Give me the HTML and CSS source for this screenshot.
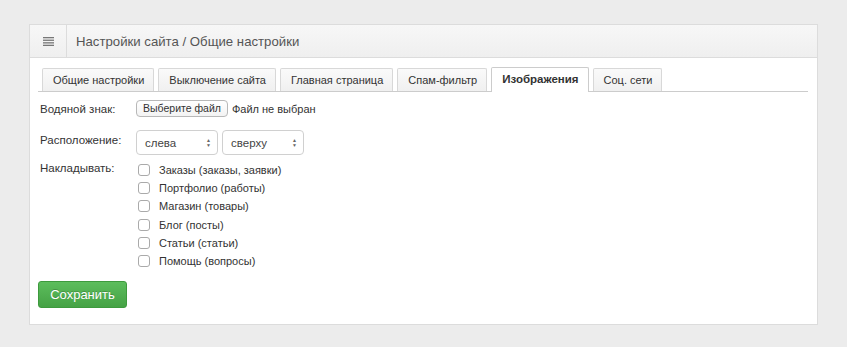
FILE: index.html
```html
<!DOCTYPE html>
<html lang="ru">
<head>
    <meta charset="UTF-8" />
    <title>Настройки сайта</title>
    <link rel="stylesheet" href="styles.css">
</head>
<body>

    <div class="panel">
        <div class="panel-header">
            <div class="panel-icon">
                <svg width="11" height="9" viewBox="0 0 11 9"><g fill="#777"><rect y="0" width="11" height="1.3"/><rect y="2.6" width="11" height="1.3"/><rect y="5.2" width="11" height="1.3"/><rect y="7.7" width="11" height="1.3"/></g></svg>
            </div>
            <div class="panel-title">Настройки сайта / Общие настройки</div>
        </div>

        <div class="panel-body">
            <ul class="tabs">
                <li class="tab">Общие настройки</li>
                <li class="tab">Выключение сайта</li>
                <li class="tab">Главная страница</li>
                <li class="tab">Спам-фильтр</li>
                <li class="tab active">Изображения</li>
                <li class="tab">Соц. сети</li>
            </ul>

            <div class="form">
                <div class="row row-file">
                    <div class="label">Водяной знак:</div>
                    <div class="control">
                        <span class="file-btn">Выберите файл</span>
                        <span class="file-name">Файл не выбран</span>
                    </div>
                </div>

                <div class="row row-select">
                    <div class="label">Расположение:</div>
                    <div class="control">
                        <div class="select">слева <span class="arrows">&#9650;<br>&#9660;</span></div>
                        <div class="select">сверху <span class="arrows">&#9650;<br>&#9660;</span></div>
                    </div>
                </div>

                <div class="row row-check">
                    <div class="label">Накладывать:</div>
                    <div class="checks">
                        <label class="check"><span class="box"></span>Заказы (заказы, заявки)</label>
                        <label class="check"><span class="box"></span>Портфолио (работы)</label>
                        <label class="check"><span class="box"></span>Магазин (товары)</label>
                        <label class="check"><span class="box"></span>Блог (посты)</label>
                        <label class="check"><span class="box"></span>Статьи (статьи)</label>
                        <label class="check"><span class="box"></span>Помощь (вопросы)</label>
                    </div>
                </div>
            </div>

            <button class="btn-save">Сохранить</button>
        </div>
    </div>

</body>
</html>
```

FILE: styles.css
```css
body {
    margin: 0;
    padding: 24px 29px;
    background: #ececec;
    font-family: "Liberation Sans", Arial, sans-serif;
    font-size: 11.5px;
    color: #333;
}

.panel {
    width: 787px;
    background: #fff;
    border: 1px solid #dcdcdc;
}

.panel-header {
    display: flex;
    height: 32px;
    border-bottom: 1px solid #dcdcdc;
    background: linear-gradient(#f7f7f7, #efefef);
}

.panel-icon {
    width: 36px;
    display: flex;
    align-items: center;
    justify-content: center;
    border-right: 1px solid #dcdcdc;
}

.panel-title {
    display: flex;
    align-items: center;
    padding-left: 9px;
    font-size: 13.2px;
    color: #555;
}

.panel-body {
    padding: 10px 9px 16px 8px;
}

.tabs {
    display: flex;
    gap: 4px;
    list-style: none;
    margin: 0;
    padding: 0 0 0 4px;
    height: 23px;
    border-bottom: 1px solid #ccc;
    align-items: flex-end;
}

.tab {
    height: 22px;
    line-height: 22px;
    padding: 0 9px 0 10px;
    border: 1px solid #d8d8d8;
    border-bottom: none;
    border-radius: 2px 2px 0 0;
    background: linear-gradient(#fafafa, #f0f0f0);
    color: #333;
    font-size: 11px;
}

.tab.active {
    height: 24px;
    line-height: 23px;
    margin-bottom: -1px;
    background: #fff;
    font-weight: bold;
    font-size: 11.5px;
    border-color: #ccc;
}

.form {
    padding-left: 2px;
}

.row {
    display: flex;
}

.label {
    width: 96px;
    color: #333;
}

.row-file {
    margin-top: 8px;
    align-items: center;
    height: 17px;
}

.control {
    display: flex;
    align-items: center;
    gap: 4px;
}

.file-btn {
    height: 15px;
    line-height: 15px;
    padding: 0 6px;
    border: 1px solid #b8b8b8;
    border-radius: 4px;
    background: linear-gradient(#fff, #f3f3f3);
    font-size: 10.5px;
}

.file-name {
    font-size: 11px;
}

.row-select {
    margin-top: 13px;
    align-items: center;
    height: 25px;
}

.row-select .label {
    margin-top: -5px;
}

.select {
    display: flex;
    justify-content: space-between;
    align-items: center;
    width: 66px;
    height: 23px;
    padding: 0 6px 0 8px;
    border: 1px solid #d0d0d0;
    border-radius: 4px;
    background: #fff;
    font-size: 11.5px;
    color: #444;
}

.arrows {
    font-size: 5px;
    line-height: 5px;
    color: #666;
    text-align: center;
}

.row-check {
    margin-top: 6px;
}

.row-check .label {
    margin-top: 1px;
}

.checks {
    display: flex;
    flex-direction: column;
}

.check {
    display: flex;
    align-items: center;
    height: 18.2px;
    font-size: 11px;
}

.box {
    width: 10px;
    height: 10px;
    margin: 0 9px 0 2px;
    border: 1px solid #aaa;
    border-radius: 3px;
    background: #fff;
}

.btn-save {
    display: block;
    margin-top: 11px;
    width: 89px;
    height: 27px;
    padding: 0;
    border: 1px solid #3d9a3d;
    border-radius: 3px;
    background: linear-gradient(#5cbd5c, #45a245);
    color: #fff;
    font-family: "Liberation Sans", Arial, sans-serif;
    font-size: 13px;
    text-shadow: 0 -1px 0 rgba(0, 0, 0, 0.2);
}
```
